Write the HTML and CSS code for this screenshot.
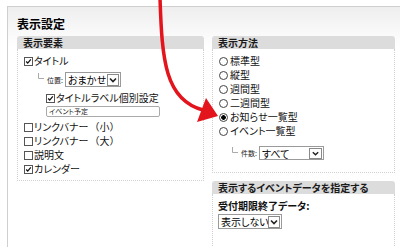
FILE: index.html
```html
<!DOCTYPE html>
<html lang="ja">
<head>
  <meta charset="UTF-8">
  <meta name="viewport" content="width=device-width, initial-scale=1.0">
  <title>表示設定</title>
  <link rel="stylesheet" href="styles.css">
</head>
<body>
<div class="panel">
  <div class="panel-title">表示設定</div>
  <div class="columns">
    <!-- 表示要素 -->
    <div class="col col-left">
      <div class="section-head">表示要素</div>
      <div class="section-body left-body">
        <div class="row"><span class="cb on"><svg viewBox="0 0 9 9"><path d="M1.5 4.5 L3.5 6.5 L7.5 1.8" /></svg></span>タイトル</div>
        <div class="row sub">
          <svg class="hook" viewBox="0 0 6 7"><path d="M0.5 0 V5.5 H6" /></svg>
          <span class="small-label">位置:</span>
          <div class="sel sel-pos">
            <span class="sel-text">おまかせ</span>
            <span class="sel-btn"><svg viewBox="0 0 10 10"><path d="M2 3.5 L5 6.5 L8 3.5" /></svg></span>
          </div>
        </div>
        <div class="row indent"><span class="cb on"><svg viewBox="0 0 9 9"><path d="M1.5 4.5 L3.5 6.5 L7.5 1.8" /></svg></span>タイトルラベル個別設定</div>
        <div class="txt">イベント予定</div>
        <div class="list">
          <div class="row"><span class="cb"></span>リンクバナー<span class="paren">（小）</span></div>
          <div class="row"><span class="cb"></span>リンクバナー<span class="paren">（大）</span></div>
          <div class="row"><span class="cb"></span>説明文</div>
          <div class="row"><span class="cb on"><svg viewBox="0 0 9 9"><path d="M1.5 4.5 L3.5 6.5 L7.5 1.8" /></svg></span>カレンダー</div>
        </div>
      </div>
    </div>

    <!-- 表示方法 -->
    <div class="col col-right">
      <div class="section-head">表示方法</div>
      <div class="section-body right-body">
        <div class="row"><span class="rd"></span>標準型</div>
        <div class="row"><span class="rd"></span>縦型</div>
        <div class="row"><span class="rd"></span>週間型</div>
        <div class="row"><span class="rd"></span>二週間型</div>
        <div class="row"><span class="rd on"></span>お知らせ一覧型</div>
        <div class="row"><span class="rd"></span>イベント一覧型</div>
        <div class="row count-row">
          <svg class="hook" viewBox="0 0 6 7"><path d="M0.5 0 V5.5 H6" /></svg>
          <span class="small-label">件数:</span>
          <div class="sel sel-count">
            <span class="sel-text">すべて</span>
            <span class="sel-btn"><svg viewBox="0 0 10 10"><path d="M2 3.5 L5 6.5 L8 3.5" /></svg></span>
          </div>
        </div>
      </div>

      <div class="section-head">表示するイベントデータを指定する</div>
      <div class="section-body event-body">
        <div class="field-label">受付期限終了データ:</div>
        <div class="sel sel-end">
          <span class="sel-text">表示しない</span>
          <span class="sel-btn"><svg viewBox="0 0 10 10"><path d="M2 3.5 L5 6.5 L8 3.5" /></svg></span>
        </div>
      </div>
    </div>
  </div>
</div>

<!-- 説明用の赤い矢印 -->
<svg class="arrow" viewBox="0 0 400 247">
  <path class="arrow-line" d="M160 -2 C162 60, 165 100, 203 110" />
  <polygon class="arrow-head" points="218,116 206,98 197,122" />
</svg>
</body>
</html>
```

FILE: styles.css
```css
* {
    margin: 0;
    padding: 0;
    box-sizing: border-box;
}

body {
    width: 400px;
    height: 247px;
    overflow: hidden;
    background-color: #fff;
    color: #111;
    font-family: "Noto Sans CJK JP", "Noto Sans", sans-serif;
    font-size: 10px;
    font-feature-settings: "palt";
}

.panel {
    margin: 6px 0 0 7px;
    height: 241px;
    overflow: hidden;
    border-top: 1px solid #cfcfcf;
    border-left: 1px solid #cfcfcf;
    background: linear-gradient(#eeeeee, #ffffff 40px);
    padding: 9px 0 0 9px;
}

.panel-title {
    font-size: 12px;
    font-weight: bold;
    line-height: 16px;
    height: 16px;
    margin-bottom: 4px;
    color: #000;
}

.columns {
    display: flex;
    gap: 8px;
    align-items: flex-start;
}

.col-left {
    width: 187px;
}

.col-right {
    width: 183px;
}

.section-head {
    height: 13px;
    line-height: 13px;
    background-color: #dcdcdc;
    border-radius: 3px 3px 0 0;
    padding-left: 6px;
    font-size: 10px;
    font-weight: bold;
    color: #1a1a1a;
    white-space: nowrap;
}

.section-body {
    border: 1px dotted #d0d0d0;
    border-top: none;
    background-color: #fff;
}

.left-body {
    padding: 5px 0 4px 6px;
}

.right-body {
    padding: 5px 0 12px 6px;
    margin-bottom: 8px;
}

.event-body {
    padding: 5px 0 0 5px;
    height: 60px;
}

.row {
    display: flex;
    align-items: center;
    height: 14px;
    line-height: 14px;
    white-space: nowrap;
}

.row.sub {
    height: 15px;
    margin-top: 4px;
    padding-left: 14px;
}

.row.indent {
    margin-top: 4px;
    padding-left: 22px;
}

.list {
    margin-top: 3px;
}

.paren {
    font-feature-settings: normal;
    margin-left: 1px;
}

/* チェックボックス */
.cb {
    width: 9px;
    height: 9px;
    border: 1px solid #555;
    background-color: #fff;
    margin-right: 1px;
    flex-shrink: 0;
    display: flex;
}

.cb svg {
    width: 100%;
    height: 100%;
}

.cb svg path {
    fill: none;
    stroke: #111;
    stroke-width: 1.6;
}

/* ラジオボタン */
.rd {
    width: 9px;
    height: 9px;
    border: 1px solid #444;
    border-radius: 50%;
    background-color: #fff;
    margin-right: 2px;
    flex-shrink: 0;
}

.rd.on {
    background: radial-gradient(circle, #000 0, #000 2px, #fff 2.6px);
}

.hook {
    width: 6px;
    height: 7px;
    margin-right: 3px;
    align-self: flex-start;
    margin-top: 1px;
    flex-shrink: 0;
}

.hook path {
    fill: none;
    stroke: #aaa;
    stroke-width: 1;
}

.small-label {
    font-size: 7px;
    margin-right: 2px;
    color: #222;
}

/* セレクトボックス */
.sel {
    display: inline-flex;
    align-items: center;
    height: 15px;
    border: 1px solid #9a9a9a;
    background-color: #fff;
    padding: 1px;
    white-space: nowrap;
    overflow: hidden;
}

.sel-text {
    flex: 1;
    min-width: 0;
    font-size: 10px;
    line-height: 13px;
    padding-left: 1px;
    color: #000;
    overflow: hidden;
}

.sel-btn {
    width: 12px;
    height: 12px;
    border: 1px solid #8a8a8a;
    display: flex;
    flex-shrink: 0;
    background-color: #fff;
}

.sel-btn svg {
    width: 100%;
    height: 100%;
}

.sel-btn svg path {
    fill: none;
    stroke: #222;
    stroke-width: 1.6;
}

.sel-pos {
    width: 56px;
}

.count-row {
    margin-top: 8px;
    padding-left: 13px;
}

.sel-count {
    width: 65px;
    height: 14px;
}

.sel-count .sel-btn {
    height: 11px;
    width: 13px;
}

.sel-end {
    width: 64px;
    margin-top: 1px;
}

.txt {
    width: 114px;
    height: 11px;
    margin-left: 22px;
    margin-top: 1px;
    border: 1px solid #aaa;
    border-radius: 2px;
    background-color: #fff;
    font-size: 7px;
    line-height: 9px;
    padding-left: 2px;
    color: #222;
    white-space: nowrap;
}

.field-label {
    font-size: 10px;
    font-weight: bold;
    line-height: 14px;
    color: #111;
}

/* 矢印 */
.arrow {
    position: absolute;
    top: 0;
    left: 0;
    width: 400px;
    height: 247px;
    pointer-events: none;
}

.arrow-line {
    fill: none;
    stroke: #e3141b;
    stroke-width: 3.5;
}

.arrow-head {
    fill: #e3141b;
}
```
